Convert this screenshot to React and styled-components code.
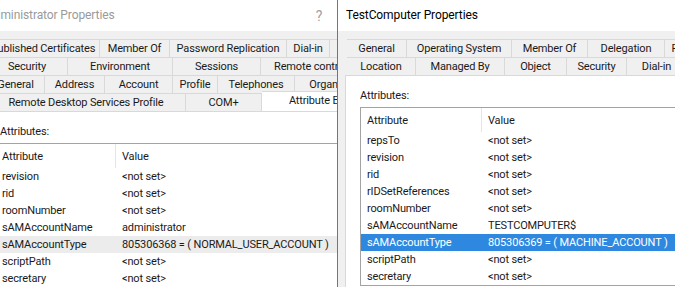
import React from 'react';
import styled, { createGlobalStyle } from 'styled-components';

const GlobalStyle = createGlobalStyle`
  body {
    margin: 0;
    overflow: hidden;
    background: #fff;
    font-family: Roboto, "Noto Sans", sans-serif;
    font-size: 11px;
    letter-spacing: -0.15px;
    color: #1a1a1a;
  }
`

const Desktop = styled.div`
  position: relative;
  width: 675px;
  height: 287px;
  overflow: hidden;
  background: #fff;
`

// windows sit on a free canvas, so they are placed by coordinates
const Window = styled.div`
  position: absolute;
  top: 0;
  left: ${p => p.$left}px;
  width: ${p => p.$width}px;
  height: 320px;
  z-index: ${p => p.$z};
  background: #f0f0f0;
  border-left: 1px solid ${p => p.$active ? '#4d7fb0' : '#aab4c0'};
  display: flex;
  flex-direction: column;
`

const TitleBar = styled.div`
  height: 31px;
  flex: none;
  background: #fff;
  display: flex;
  align-items: center;
  padding: 0 0 0 8px;
  font-size: 12px;
  letter-spacing: -0.1px;
  color: ${p => p.$active ? '#000' : '#9a9a9a'};
`

const TitleText = styled.span`
  flex: 1;
  margin-top: -1px;
  white-space: nowrap;
`

const CaptionButton = styled.span`
  flex: none;
  width: 46px;
  text-align: center;
  color: #a0a0a0;
  font-size: 14px;
`

const Body = styled.div`
  flex: 1;
  padding: 8px 0 0 7px;
  display: flex;
  flex-direction: column;
`

const TabStrip = styled.div`
  display: flex;
  flex-direction: column;
  padding: 0 2px;
`

const TabRow = styled.div`
  display: flex;
  height: 18px;
`

const Tab = styled.div`
  flex: none;
  width: ${p => p.$width}px;
  box-sizing: border-box;
  display: flex;
  align-items: center;
  justify-content: center;
  white-space: nowrap;
  overflow: hidden;
  background: ${p => p.$active ? '#fff' : '#f0f0f0'};
  border: 1px solid #d9d9d9;
  border-left: none;
  border-bottom: none;
  color: #1a1a1a;
  ${p => p.$active && `
    height: 20px;
    margin-top: -2px;
    position: relative;
    z-index: 1;
    align-items: flex-start;
    padding-top: 2px;
  `}
`

const TabPage = styled.div`
  flex: 1;
  background: #fff;
  border: 1px solid #d9d9d9;
  padding: 12px 0 0 14px;
`

const Label = styled.div`
  line-height: 16px;
  height: 16px;
`

const ListBox = styled.div`
  margin: 3px 0 0 ${p => p.$shift}px;
  border: 1px solid #a3a3a3;
  background: #fff;
  width: 600px;
`

const HeaderRow = styled.div`
  display: flex;
  height: 24px;
  align-items: center;
`

const Row = styled.div`
  display: flex;
  height: 17px;
  align-items: center;
  background: ${p => p.$selected === 'focus' ? '#2e88e0' : p.$selected === 'dim' ? '#ececec' : 'transparent'};
  color: ${p => p.$selected === 'focus' ? '#fff' : '#1a1a1a'};
`

const NameCell = styled.div`
  flex: none;
  width: ${p => p.$width}px;
  box-sizing: border-box;
  padding-left: 6px;
  white-space: nowrap;
  align-self: stretch;
  display: flex;
  align-items: center;
  ${p => p.$header && 'border-right: 1px solid #e5e5e5;'}
`

const ValueCell = styled.div`
  padding-left: 6px;
  white-space: nowrap;
`

const leftTabs = [
  [['Published Certificates', 113], ['Member Of', 70], ['Password Replication', 117], ['Dial-in', 43], ['Object', 60]],
  [['Security', 81], ['Environment', 105], ['Sessions', 88], ['Remote control', 100]],
  [['General', 58], ['Address', 60], ['Account', 68], ['Profile', 45], ['Telephones', 77], ['Organization', 90]],
  [['Remote Desktop Services Profile', 199], ['COM+', 76], ['Attribute Editor', 126, true]],
];

const rightTabs = [
  [['General', 60], ['Operating System', 105], ['Member Of', 76], ['Delegation', 77], ['Password Replication', 117]],
  [['Location', 69], ['Managed By', 89], ['Object', 62], ['Security', 60], ['Dial-in', 60], ['Attribute Editor', 100, true]],
];

const leftRows = [
  ['revision', '<not set>'],
  ['rid', '<not set>'],
  ['roomNumber', '<not set>'],
  ['sAMAccountName', 'administrator'],
  ['sAMAccountType', '805306368 = ( NORMAL_USER_ACCOUNT )', 'dim'],
  ['scriptPath', '<not set>'],
  ['secretary', '<not set>'],
];

const rightRows = [
  ['repsTo', '<not set>'],
  ['revision', '<not set>'],
  ['rid', '<not set>'],
  ['rIDSetReferences', '<not set>'],
  ['roomNumber', '<not set>'],
  ['sAMAccountName', 'TESTCOMPUTER$'],
  ['sAMAccountType', '805306369 = ( MACHINE_ACCOUNT )', 'focus'],
  ['scriptPath', '<not set>'],
  ['secretary', '<not set>'],
];

function PropertiesWindow({ title, left, width, z, active, tabs, rows, nameWidth, listShift }) {
  return (
    <Window $left={left} $width={width} $z={z} $active={active}>
      <TitleBar $active={active}>
        <TitleText>{title}</TitleText>
        <CaptionButton>?</CaptionButton>
        <CaptionButton>✕</CaptionButton>
      </TitleBar>
      <Body>
        <TabStrip>
          {tabs.map((row, i) => (
            <TabRow key={i}>
              {row.map(([name, w, on]) => (
                <Tab key={name} $width={w} $active={on}>{name}</Tab>
              ))}
            </TabRow>
          ))}
        </TabStrip>
        <TabPage>
          <Label>Attributes:</Label>
          <ListBox $shift={listShift}>
            <HeaderRow>
              <NameCell $width={nameWidth} $header>Attribute</NameCell>
              <ValueCell>Value</ValueCell>
            </HeaderRow>
            {rows.map(([name, value, sel]) => (
              <Row key={name} $selected={sel}>
                <NameCell $width={nameWidth}>{name}</NameCell>
                <ValueCell>{value}</ValueCell>
              </Row>
            ))}
          </ListBox>
        </TabPage>
      </Body>
    </Window>
  );
}

export default function App() {
  return (
    <Desktop>
      <GlobalStyle />
      <PropertiesWindow
        title="Administrator Properties"
        left={-23}
        width={410}
        z={1}
        tabs={leftTabs}
        rows={leftRows}
        nameWidth={120}
        listShift={-5}
      />
      <PropertiesWindow
        title="TestComputer Properties"
        left={337}
        width={440}
        z={2}
        active
        tabs={rightTabs}
        rows={rightRows}
        nameWidth={121}
        listShift={0}
      />
    </Desktop>
  );
}
